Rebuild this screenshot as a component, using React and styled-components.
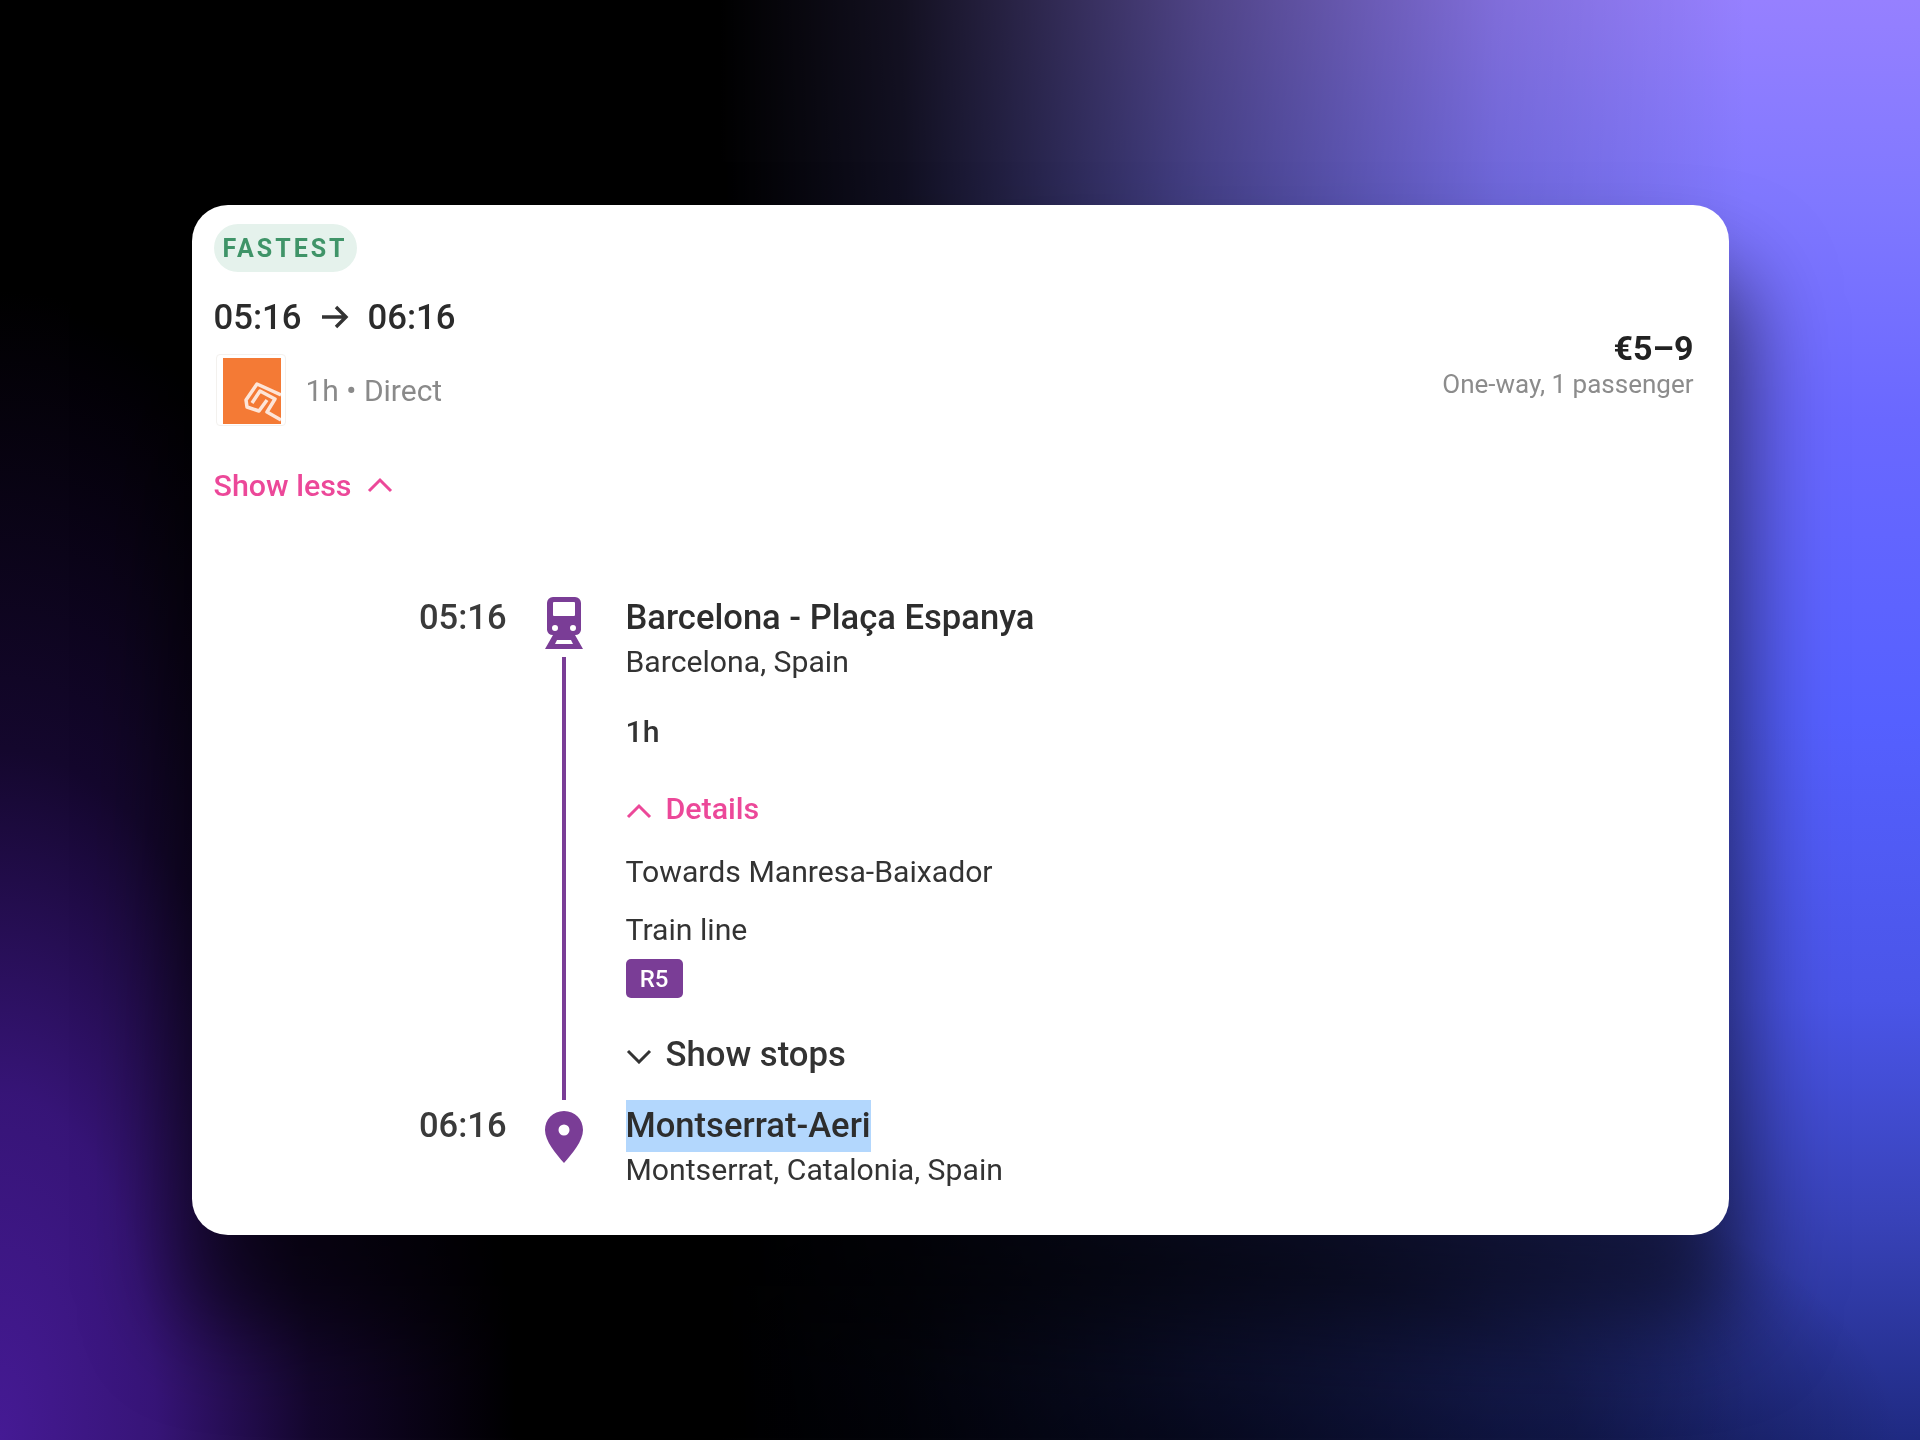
import React from 'react'
import styled, { createGlobalStyle } from 'styled-components'

const GlobalStyle = createGlobalStyle`
  html, body { margin: 0; padding: 0; background: #000; }
  body { font-family: Roboto, "Liberation Sans", sans-serif; }
`

const Page = styled.div`
  width: 1920px;
  height: 1440px;
  display: flex;
  align-items: center;
  justify-content: center;
  background:
    radial-gradient(ellipse 520px 1150px at 0 1440px, #451a94 0%, rgba(64,24,140,0.85) 30%, rgba(40,14,90,0.5) 60%, rgba(20,8,50,0) 100%),
    radial-gradient(ellipse 720px 320px at 1180px 1440px, rgba(0,0,0,0.55) 0%, rgba(0,0,0,0.4) 55%, rgba(0,0,0,0) 100%),
    linear-gradient(90deg, #000 37.5%, rgba(0,0,0,0.87) 47%, rgba(0,0,0,0.75) 52%, rgba(0,0,0,0.48) 62.5%, rgba(0,0,0,0.15) 78%, rgba(0,0,0,0) 91%),
    linear-gradient(180deg, #9680ff 0px, #8078ff 200px, #6a68ff 420px, #5560ff 720px, #4a55e8 1000px, #3842b8 1220px, #1f2a82 1440px);
`

const Card = styled.div`
  width: 1537px;
  height: 1030px;
  box-sizing: border-box;
  padding: 19px 35px 0 22px;
  background: #fff;
  border-radius: 36px;
  box-shadow: 0 80px 90px 15px rgba(0, 0, 0, 0.6);
  color: #2b2b2b;
  filter: blur(0.7px);
`

const Badge = styled.div`
  display: inline-flex;
  align-items: center;
  height: 48px;
  padding: 0 9px;
  border-radius: 24px;
  background: #e5f2ec;
  color: #3f9468;
  font-size: 25px;
  font-weight: 700;
  letter-spacing: 3px;
`

const Summary = styled.div`
  display: flex;
  justify-content: space-between;
  align-items: flex-end;
`

const Times = styled.div`
  display: flex;
  align-items: center;
  gap: 19px;
  margin-top: 23px;
  font-size: 34.7px;
  font-weight: 500;
  line-height: 44px;
`

const TripInfo = styled.div`
  display: flex;
  align-items: center;
  gap: 20px;
  margin-top: 15px;
  margin-bottom: 2px;
  font-size: 30px;
  color: #8a8a8a;
`

const LogoBox = styled.div`
  width: 70px;
  height: 72px;
  box-sizing: border-box;
  padding: 3px 4px 1px 6px;
  border: 1px solid #f3f1ee;
  border-radius: 4px;
  margin-left: 2px;
`

const Price = styled.div`
  text-align: right;
  margin-bottom: 28px;
`

const Amount = styled.div`
  font-size: 34px;
  font-weight: 700;
  line-height: 40px;
  color: #222;
`

const PriceNote = styled.div`
  font-size: 26px;
  line-height: 32px;
  color: #8c8c8c;
`

const Toggle = styled.div`
  display: flex;
  align-items: center;
  gap: 14px;
  height: 36px;
  font-size: 30.4px;
  font-weight: 500;
  color: #ec4899;
`

const ShowLess = styled(Toggle)`
  gap: 16px;
  height: 40px;
  margin-top: 37px;
`

const Details = styled(Toggle)`
  margin-top: 38px;
`

const ShowStops = styled(Toggle)`
  height: 40px;
  margin-top: 36px;
  padding-bottom: 26px;
  font-size: 34.7px;
  color: #333;
`

const Timeline = styled.div`
  margin-top: 90px;
  padding-left: 201px;
`

const Stop = styled.div`
  display: grid;
  grid-template-columns: 92px 119px 1fr;
`

const Time = styled.div`
  margin-top: ${(p) => p.$top || 0}px;
  font-size: 34.5px;
  font-weight: 500;
  line-height: 44px;
  text-align: right;
  color: #3a3a3a;
`

const Rail = styled.div`
  display: flex;
  flex-direction: column;
  align-items: center;
  width: 106px;
  margin-left: 4px;
  padding-top: ${(p) => p.$top || 0}px;
`

const Line = styled.div`
  flex: 1;
  width: 4px;
  margin-top: 7px;
  background: #7a3d96;
`

const Title = styled.div`
  font-size: 34.6px;
  font-weight: 500;
  line-height: 44px;
  color: #2d2d2d;
`

const Highlight = styled.span`
  display: block;
  width: fit-content;
  background: #b3d7fd;
  line-height: 50px;
  height: 52px;
`

const Sub = styled.div`
  font-size: 30.2px;
  line-height: 40px;
  margin-top: ${(p) => p.$top || 0}px;
  font-weight: ${(p) => p.$weight || 400};
  color: #333;
`

const LineTag = styled.div`
  display: flex;
  align-items: center;
  justify-content: center;
  width: 57px;
  height: 39px;
  margin-top: 9px;
  border-radius: 5px;
  background: #7a3d96;
  color: #fff;
  font-size: 24px;
  font-weight: 500;
`

const ChevronSvg = styled.svg`
  margin-top: ${(p) => p.$shift || 0}px;
`

function TrainIcon() {
  return (
    <svg width="40" height="54" viewBox="0 0 40 54">
      <path
        fill="#7a3d96"
        fillRule="evenodd"
        d="M9 1h22a6 6 0 0 1 6 6v27a6 6 0 0 1-6 5l8 14H1l8-14a6 6 0 0 1-6-5V7a6 6 0 0 1 6-6zm0 6v12a1 1 0 0 0 1 1h20a1 1 0 0 0 1-1V7a1 1 0 0 0-1-1H10a1 1 0 0 0-1 1zm2 22a3 3 0 1 0 0 6 3 3 0 0 0 0-6zm18 0a3 3 0 1 0 0 6 3 3 0 0 0 0-6zM13 44l-2 4h18l-2-4z"
      />
    </svg>
  )
}

function PinIcon() {
  return (
    <svg width="40" height="54" viewBox="0 0 40 54">
      <path
        fill="#7a3d96"
        fillRule="evenodd"
        d="M20 1C9 1 1 9.500 1 20c0 11 11 24 19 33 8-9 19-22 19-33C39 9.500 31 1 20 1zm0 13.500a5.500 5.500 0 1 1 0 11 5.500 5.500 0 0 1 0-11z"
      />
    </svg>
  )
}

function Chevron({ up, color, shift }) {
  return (
    <ChevronSvg $shift={shift} width="26" height="16" viewBox="0 0 26 16">
      <path
        d={up ? 'M2 14L13 3l11 11' : 'M2 3l11 11L24 3'}
        fill="none"
        stroke={color}
        strokeWidth="3"
      />
    </ChevronSvg>
  )
}

function Arrow() {
  return (
    <svg width="28" height="26" viewBox="0 0 28 26">
      <path d="M1 13h24M15 3l10 10-10 10" fill="none" stroke="#333" strokeWidth="3.400" />
    </svg>
  )
}

function OperatorLogo() {
  return (
    <svg width="100%" height="100%" viewBox="0 0 58 66" preserveAspectRatio="none">
      <rect width="58" height="66" fill="#f47a35" />
      <path
        d="M58 37L34 26 23 42l1 7 12 4 8-11M29 45l8-12 15 8-8 13 14 8"
        fill="none"
        stroke="#fde5d8"
        strokeWidth="3.500"
        strokeLinejoin="round"
      />
    </svg>
  )
}

export default function App() {
  return (
    <Page>
      <GlobalStyle />
      <Card>
        <Badge>FASTEST</Badge>
        <Summary>
          <div>
            <Times>
              05:16 <Arrow /> 06:16
            </Times>
            <TripInfo>
              <LogoBox>
                <OperatorLogo />
              </LogoBox>
              <span>1h • Direct</span>
            </TripInfo>
          </div>
          <Price>
            <Amount>€5–9</Amount>
            <PriceNote>One-way, 1 passenger</PriceNote>
          </Price>
        </Summary>
        <ShowLess>
          Show less <Chevron up color="#ec4899" />
        </ShowLess>
        <Timeline>
          <Stop>
            <Time>05:16</Time>
            <Rail $top={1}>
              <TrainIcon />
              <Line />
            </Rail>
            <div>
              <Title>Barcelona - Plaça Espanya</Title>
              <Sub $top={3}>Barcelona, Spain</Sub>
              <Sub $top={30} $weight={500}>1h</Sub>
              <Details>
                <Chevron up color="#ec4899" shift={5} /> Details
              </Details>
              <Sub $top={26}>Towards Manresa-Baixador</Sub>
              <Sub $top={18}>Train line</Sub>
              <LineTag>R5</LineTag>
              <ShowStops>
                <Chevron color="#333" shift={3} /> Show stops
              </ShowStops>
            </div>
          </Stop>
          <Stop>
            <Time $top={3}>06:16</Time>
            <Rail $top={10}>
              <PinIcon />
            </Rail>
            <div>
              <Title>
                <Highlight>Montserrat-Aeri</Highlight>
              </Title>
              <Sub $top={-2}>Montserrat, Catalonia, Spain</Sub>
            </div>
          </Stop>
        </Timeline>
      </Card>
    </Page>
  )
}
